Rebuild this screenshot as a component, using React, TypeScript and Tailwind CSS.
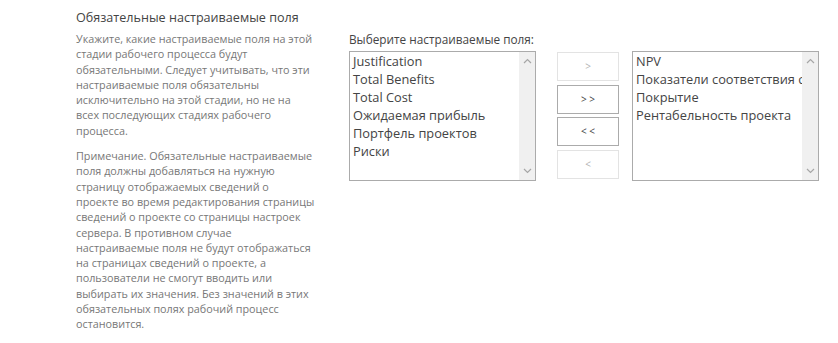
const available = [
  "Justification",
  "Total Benefits",
  "Total Cost",
  "Ожидаемая прибыль",
  "Портфель проектов",
  "Риски",
];

const selected = [
  "NPV",
  "Показатели соответствия стратегии",
  "Покрытие",
  "Рентабельность проекта",
];

// строки описания — переносы как в оригинале
const intro = [
  "Укажите, какие настраиваемые поля на этой",
  "стадии рабочего процесса будут",
  "обязательными. Следует учитывать, что эти",
  "настраиваемые поля обязательны",
  "исключительно на этой стадии, но не на",
  "всех последующих стадиях рабочего",
  "процесса.",
];

const note = [
  "Примечание. Обязательные настраиваемые",
  "поля должны добавляться на нужную",
  "страницу отображаемых сведений о",
  "проекте во время редактирования страницы",
  "сведений о проекте со страницы настроек",
  "сервера. В противном случае",
  "настраиваемые поля не будут отображаться",
  "на страницах сведений о проекте, а",
  "пользователи не смогут вводить или",
  "выбирать их значения. Без значений в этих",
  "обязательных полях рабочий процесс",
  "остановится.",
];

function Chevron({ up }: { up?: boolean }) {
  return (
    <svg width="9" height="6" viewBox="0 0 9 6" className="block">
      <path
        d={up ? "M1 5 L4.5 1.5 L8 5" : "M1 1 L4.5 4.5 L8 1"}
        fill="none"
        stroke="#a6a6a6"
        strokeWidth="1.2"
      />
    </svg>
  );
}

function ListBox({ items }: { items: string[] }) {
  return (
    <div className="flex w-[187px] h-[130px] border border-[#ababab] bg-white">
      <div className="flex-1 overflow-hidden pl-[3px]">
        {items.map((it) => (
          <div key={it} className="h-[18px] leading-[18px] text-[12.8px] text-[#444] whitespace-nowrap">
            {it}
          </div>
        ))}
      </div>
      <div className="w-[16px] bg-[#f0f0f0] flex flex-col items-center justify-between py-[6px]">
        <Chevron up />
        <Chevron />
      </div>
    </div>
  );
}

function MoveButton({ label, disabled }: { label: string; disabled?: boolean }) {
  return (
    <div
      className={`w-[62px] h-[29px] flex items-center justify-center border text-[10px] ${
        disabled ? "border-[#e3e3e3] text-[#b3b3b3]" : "border-[#ababab] text-[#444]"
      }`}
    >
      {label}
    </div>
  );
}

export default function App() {
  return (
    <div
      className="w-[838px] h-[343px] bg-white flex"
      style={{ fontFamily: '"Open Sans", "Noto Sans", sans-serif' }}
    >
      <div className="pl-[76px] pt-[9px] w-[320px] shrink-0">
        <h3 className="text-[12.6px] leading-[18px] text-[#444]">
          Обязательные настраиваемые поля
        </h3>
        <div className="mt-[4px] text-[10.8px] leading-[15.3px] text-[#777] whitespace-nowrap">
          <p>
            {intro.map((l) => (
              <span key={l} className="block">{l}</span>
            ))}
          </p>
          <p className="mt-[10px]">
            {note.map((l) => (
              <span key={l} className="block">{l}</span>
            ))}
          </p>
        </div>
      </div>

      <div className="pl-[29px] pt-[30px]">
        <div className="text-[11.8px] leading-[18px] text-[#444] mb-[3px]">
          Выберите настраиваемые поля:
        </div>
        <div className="flex items-start">
          <ListBox items={available} />
          <div className="ml-[21px] mt-[1px] flex flex-col gap-[3.5px]">
            <MoveButton label=">" disabled />
            <MoveButton label="> >" />
            <MoveButton label="< <" />
            <MoveButton label="<" disabled />
          </div>
          <div className="ml-[13px]">
            <ListBox items={selected} />
          </div>
        </div>
      </div>
    </div>
  );
}
